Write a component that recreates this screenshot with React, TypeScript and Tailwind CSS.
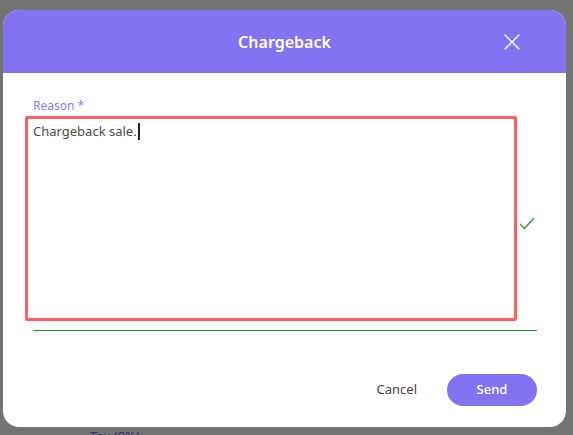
import React from 'react';

const App: React.FC = () => {
  return (
    <div
      className="relative w-[573px] h-[435px] overflow-hidden bg-[#737373]"
      style={{ fontFamily: '"Noto Sans", Lato, sans-serif' }}
    >
      {/* Page behind the overlay */}
      <div className="absolute left-[90px] top-[427px] text-[13px] text-[#2b2a6b]">Tax (0%)</div>

      {/* Dialog */}
      <div className="absolute left-[3px] top-[10px] w-[563px] h-[417px] bg-white rounded-[16px] overflow-hidden flex flex-col">
        <div className="relative h-[63px] bg-[#8473f1] flex items-center justify-center shrink-0">
          <span className="text-white text-[16px] font-semibold">Chargeback</span>
          <button className="absolute right-[46px] top-[24px] w-[16px] h-[16px]">
            <svg viewBox="0 0 16 16" width="16" height="16" fill="none" stroke="white" strokeWidth="1.3">
              <path d="M0.5 0.5 L15.5 15.5 M15.5 0.5 L0.5 15.5" />
            </svg>
          </button>
        </div>

        <div className="flex-1 flex flex-col pl-[22px] pr-[29px] pt-[25px]">
          <label className="pl-[8px] text-[12px] leading-[16px] text-[#8b7cf6]">Reason *</label>
          <div className="flex items-start mt-[2px]">
            <div className="w-[492px] h-[205px] border-[3px] border-[#ff5f63] rounded-[2px] px-[5px] pt-[2px] text-[13px] leading-[20px] text-[#4a4a4a]">
              Chargeback sale.<span className="inline-block w-[2px] h-[17px] bg-[#222] align-[-4px] ml-[1px]" />
            </div>
            <svg className="mt-[101px] ml-[2px]" viewBox="0 0 16 13" width="16" height="13" fill="none" stroke="#3d8b3d" strokeWidth="1.3">
              <path d="M1 7 L5.5 11.5 L15 1" />
            </svg>
          </div>
          <div className="ml-[8px] mt-[9px] w-[504px] h-px bg-[#228b22]" />

          <div className="flex items-center justify-end gap-[30px] mt-[43px]">
            <button className="text-[13px] text-[#444]">Cancel</button>
            <button className="w-[90px] h-[32px] rounded-full bg-[#8473f1] text-white text-[13px] font-medium">
              Send
            </button>
          </div>
        </div>
      </div>
    </div>
  );
};

export default App;
